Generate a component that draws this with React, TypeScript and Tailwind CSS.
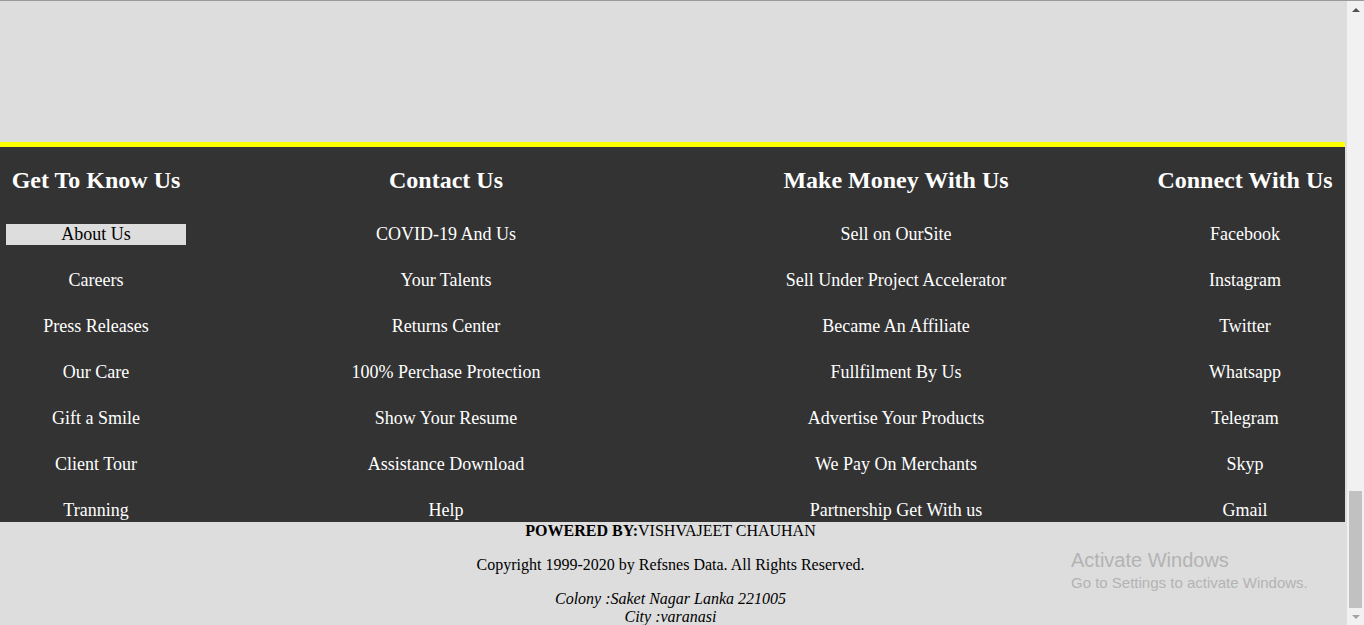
import React from "react";

const columns = [
  {
    title: "Get To Know Us",
    width: "w-[180px]",
    offset: "ml-0",
    items: ["About Us", "Careers", "Press Releases", "Our Care", "Gift a Smile", "Client Tour", "Tranning"],
  },
  {
    title: "Contact Us",
    width: "w-[240px]",
    offset: "ml-[140px]",
    items: [
      "COVID-19 And Us",
      "Your Talents",
      "Returns Center",
      "100% Perchase Protection",
      "Show Your Resume",
      "Assistance Download",
      "Help",
    ],
  },
  {
    title: "Make Money With Us",
    width: "w-[260px]",
    offset: "ml-[200px]",
    items: [
      "Sell on OurSite",
      "Sell Under Project Accelerator",
      "Became An Affiliate",
      "Fullfilment By Us",
      "Advertise Your Products",
      "We Pay On Merchants",
      "Partnership Get With us",
    ],
  },
  {
    title: "Connect With Us",
    width: "w-[180px]",
    offset: "ml-[129px]",
    items: ["Facebook", "Instagram", "Twitter", "Whatsapp", "Telegram", "Skyp", "Gmail"],
  },
];

function Scrollbar() {
  return (
    <div className="flex h-full w-[17px] flex-col bg-[#f1f1f1]">
      <div className="flex h-[17px] items-center justify-center">
        <div className="h-0 w-0 border-x-[4px] border-b-[4px] border-x-transparent border-b-[#505050]" />
      </div>
      <div className="h-[473px]" />
      <div className="ml-[2px] h-[117px] w-[13px] bg-[#c1c1c1]" />
      <div className="flex h-[17px] items-center justify-center">
        <div className="h-0 w-0 border-x-[4px] border-t-[4px] border-x-transparent border-t-[#a3a3a3]" />
      </div>
    </div>
  );
}

export default function App() {
  return (
    <div className="relative flex h-[625px] w-full flex-col overflow-hidden bg-[#dddddd] font-['Liberation_Serif',serif]">
      <div className="h-[1px] w-full bg-[#9a9a9a]" />
      <div className="flex h-[624px]">
        <main className="w-[1347px]">
          {/* empty page body above the footer */}
          <div className="h-[141px]" />

          <footer className="h-[380px] w-[1345px] border-t-[5px] border-[#ffff00] bg-[#333333] pl-[6px] pt-[19px] text-white">
            <div className="flex">
              {columns.map((col) => (
                <div key={col.title} className={`flex flex-col items-center ${col.width} ${col.offset}`}>
                  <h2 className="whitespace-nowrap text-[24px] font-bold leading-[28px]">{col.title}</h2>
                  <ul className="mt-[30px] flex w-full flex-col items-center gap-[25px]">
                    {col.items.map((item) => (
                      <li
                        key={item}
                        className={
                          item === "About Us"
                            ? "h-[21px] w-full whitespace-nowrap bg-[#dddddd] text-center text-[18px] leading-[21px] text-black"
                            : "h-[21px] whitespace-nowrap text-center text-[18px] leading-[21px]"
                        }
                      >
                        {item}
                      </li>
                    ))}
                  </ul>
                </div>
              ))}
            </div>
          </footer>

          <div className="w-[1341px] text-center text-[16px] leading-[18px] text-black">
            <p>
              <b>POWERED BY:</b>VISHVAJEET CHAUHAN
            </p>
            <p className="mt-[16px]">Copyright 1999-2020 by Refsnes Data. All Rights Reserved.</p>
            <address className="mt-[16px] italic">
              Colony :Saket Nagar Lanka 221005
              <br />
              City :varanasi
            </address>
          </div>
        </main>
        <Scrollbar />
      </div>

      {/* windows activation watermark */}
      <div className="pointer-events-none absolute left-[1071px] top-[549px] font-['Liberation_Sans',sans-serif] text-[#b3b3b3]">
        <div className="text-[20px] leading-[23px]">Activate Windows</div>
        <div className="mt-[2px] text-[15px] leading-[17px]">Go to Settings to activate Windows.</div>
      </div>
    </div>
  );
}
